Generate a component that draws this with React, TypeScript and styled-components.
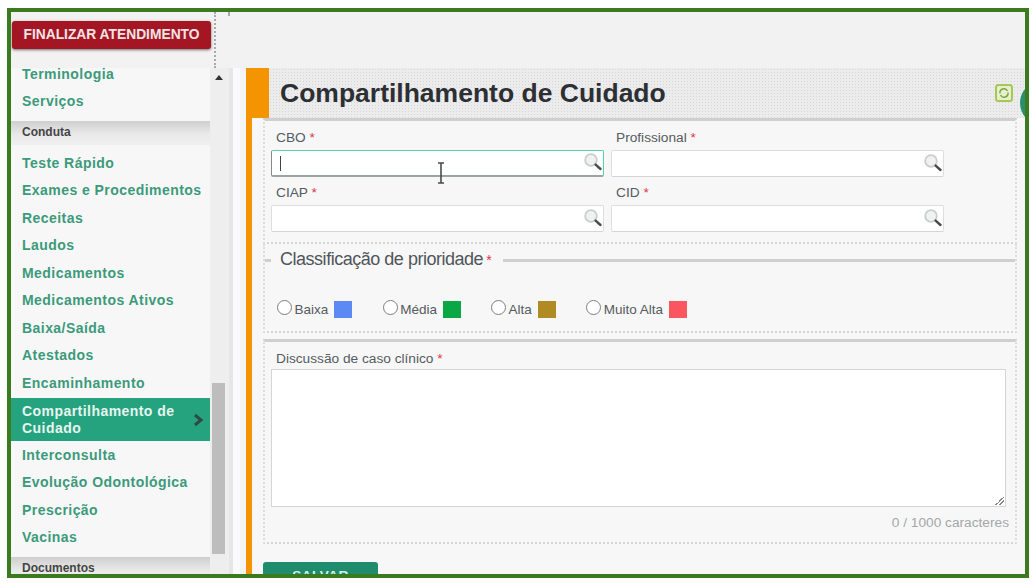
import React from "react";
import styled, { createGlobalStyle } from "styled-components";

const GlobalStyle = createGlobalStyle`
	html, body {
		margin: 0;
		background: #fff;
		font-family: "Liberation Sans", Arial, sans-serif;
	}
`;

const topLinks = ["Terminologia", "Serviços"];
const condutaLinks = [
	"Teste Rápido",
	"Exames e Procedimentos",
	"Receitas",
	"Laudos",
	"Medicamentos",
	"Medicamentos Ativos",
	"Baixa/Saída",
	"Atestados",
	"Encaminhamento",
];
const afterLinks = ["Interconsulta", "Evolução Odontológica", "Prescrição", "Vacinas"];
const priorities = [
	{ name: "Baixa", color: "#5b8af5", gap: 30.5 },
	{ name: "Média", color: "#0aa844", gap: 30 },
	{ name: "Alta", color: "#b08a22", gap: 30.5 },
	{ name: "Muito Alta", color: "#fb5560", gap: 0 },
];

const SearchIcon: React.FC = () => (
	<LensSvg width="20" height="20" viewBox="0 0 20 20">
		<circle cx="8" cy="8" r="5.8" fill="#eff2f0" stroke="#c9cecb" strokeWidth="1.8" />
		<path d="M12.6 12.6 L17.5 17" stroke="#4a4a4a" strokeWidth="2.4" strokeLinecap="round" />
	</LensSvg>
);

const Lookup: React.FC<{ focused?: boolean }> = ({ focused }) => (
	<LookupBox $focused={focused}>
		{focused && <Caret />}
		<SearchIcon />
	</LookupBox>
);

const Field: React.FC<{ label: string; focused?: boolean }> = ({ label, focused }) => (
	<FieldCell>
		<FieldLabel>
			{label} <Req>*</Req>
		</FieldLabel>
		<Lookup focused={focused} />
	</FieldCell>
);

const App: React.FC = () => {
	return (
		<Frame>
			<GlobalStyle />
			<TopBar>
				<TopLeft>
					<FinishButton>FINALIZAR ATENDIMENTO</FinishButton>
				</TopLeft>
				<DottedStub />
			</TopBar>
			<Body>
				<Sidebar>
					<NavList>
						{topLinks.map((l) => (
							<NavItem key={l}>{l}</NavItem>
						))}
						<NavHeading>Conduta</NavHeading>
						{condutaLinks.map((l) => (
							<NavItem key={l}>{l}</NavItem>
						))}
						<ActiveItem>
							<span>Compartilhamento de Cuidado</span>
							<svg width="12" height="14" viewBox="0 0 12 14">
								<path d="M3 2 L9 7 L3 12" fill="none" stroke="#2f4a42" strokeWidth="3" />
							</svg>
						</ActiveItem>
						{afterLinks.map((l) => (
							<NavItem key={l}>{l}</NavItem>
						))}
						<NavHeading>Documentos</NavHeading>
					</NavList>
					<ScrollTrack>
						<ScrollArrow />
						<ScrollThumb />
					</ScrollTrack>
				</Sidebar>
				<Gutter />
				<Main>
					<PageHeader>
						<OrangeTab />
						<HeaderBand>
							<PageTitle>Compartilhamento de Cuidado</PageTitle>
							<RefreshButton>
								<svg width="18" height="18" viewBox="0 0 18 18">
									<rect x="1" y="1" width="16" height="16" rx="2.5" fill="#e6f0cf" stroke="#a6c756" strokeWidth="2" />
									<path d="M5 9.5 A4 4 0 0 1 12.5 7 M13 8.5 A4 4 0 0 1 5.5 11" fill="none" stroke="#7ba53c" strokeWidth="1.4" />
								</svg>
							</RefreshButton>
						</HeaderBand>
					</PageHeader>
					<Content>
						<FieldsBox>
							<FieldsGrid>
								<Field label="CBO" focused />
								<Field label="Profissional" />
								<Field label="CIAP" />
								<Field label="CID" />
							</FieldsGrid>
						</FieldsBox>
						<PriorityBox>
							<LegendRow>
								<LegendLine $w={6} />
								<LegendText>
									Classificação de prioridade<LegendReq>*</LegendReq>
								</LegendText>
								<LegendLine />
							</LegendRow>
							<RadioRow>
								{priorities.map((p) => (
									<RadioOption key={p.name} $gap={p.gap}>
										<RadioDot />
										<RadioName>{p.name}</RadioName>
										<Swatch $color={p.color} />
									</RadioOption>
								))}
							</RadioRow>
						</PriorityBox>
						<DiscussionBox>
							<FieldLabel>
								Discussão de caso clínico <Req>*</Req>
							</FieldLabel>
							<TextBox />
							<Counter>0 / 1000 caracteres</Counter>
						</DiscussionBox>
						<SaveButton>SALVAR</SaveButton>
					</Content>
				</Main>
			</Body>
			<TealCircle />
			<IBeam width="10" height="22" viewBox="0 0 10 22">
				<path d="M2 1 H8 M5 1 V21 M2 21 H8" fill="none" stroke="#4b4b4b" strokeWidth="1.6" />
			</IBeam>
		</Frame>
	);
};

const Frame = styled.div`
	position: relative;
	box-sizing: border-box;
	width: 1022px;
	height: 570px;
	margin: 8px 0 0 7px;
	border: 4px solid #3c7a20;
	background: #f4f4f4;
	overflow: hidden;
	display: flex;
	flex-direction: column;
`;
const TopBar = styled.div`
	flex: none;
	height: 56px;
	display: flex;
	background: #f2f2f2;
`;
const TopLeft = styled.div`
	box-sizing: border-box;
	width: 205px;
	height: 100%;
	padding: 9px 0 0 1px;
	border-right: 2px dotted #a9a9a9;
`;
const DottedStub = styled.div`
	width: 0;
	height: 4px;
	margin-left: 12px;
	border-left: 2px dotted #a9a9a9;
`;
const FinishButton = styled.button`
	display: block;
	width: 199px;
	height: 28px;
	padding: 0 0 2px;
	border: 0;
	border-radius: 3px;
	background: #a51625;
	box-shadow: 0 1px 3px rgba(0, 0, 0, 0.55);
	color: #f3e4e4;
	font: bold 13.8px "Liberation Sans", Arial, sans-serif;
`;
const Body = styled.div`
	flex: 1;
	min-height: 0;
	display: flex;
`;
const Sidebar = styled.div`
	flex: none;
	width: 218px;
	display: flex;
`;
const NavList = styled.div`
	flex: none;
	width: 199px;
	background: #f7f7f7;
`;
const NavItem = styled.div`
	box-sizing: border-box;
	height: 27.5px;
	padding-left: 11px;
	line-height: 27.5px;
	color: #3c9a7b;
	font-size: 14px;
	font-weight: bold;
	letter-spacing: 0.45px;
	white-space: nowrap;
	&:first-child {
		height: 20px;
		line-height: 12px;
	}
`;
const NavHeading = styled.div`
	height: 24px;
	margin: 5px 0;
	padding-left: 11px;
	line-height: 23px;
	background: linear-gradient(#cfcfcf, #e9e9e9 55%, #f0f0f0);
	color: #444;
	font-size: 12px;
	font-weight: bold;
`;
const ActiveItem = styled.div`
	box-sizing: border-box;
	height: 43px;
	margin: 0.75px 0 1px;
	padding: 2px 6px 0 11px;
	display: flex;
	align-items: center;
	justify-content: space-between;
	background: #25a37e;
	color: #e8f5f0;
	font-size: 14px;
	font-weight: bold;
	letter-spacing: 0.45px;
	line-height: 17px;
	span {
		width: 170px;
	}
`;
const ScrollTrack = styled.div`
	flex: none;
	width: 19px;
	padding-left: 2px;
	box-sizing: border-box;
	display: flex;
	flex-direction: column;
	background: #eeeeee;
`;
const ScrollArrow = styled.div`
	flex: none;
	width: 0;
	height: 0;
	margin: 7px 0 0 3px;
	border-left: 4px solid transparent;
	border-right: 4px solid transparent;
	border-bottom: 5px solid #333;
`;
const ScrollThumb = styled.div`
	flex: none;
	width: 13px;
	height: 171px;
	margin-top: auto;
	margin-bottom: 20px;
	background: #bdbdbd;
`;
const Gutter = styled.div`
	flex: none;
	width: 17px;
	background: linear-gradient(90deg, #e6e6e6 0 4px, #fafafc 4px 11px, #f4f4f4 11px);
`;
const Main = styled.div`
	flex: 1;
	min-width: 0;
	display: flex;
	flex-direction: column;
	border-left: 6px solid #f49500;
`;
const PageHeader = styled.div`
	flex: none;
	height: 50px;
	display: flex;
`;
const OrangeTab = styled.div`
	flex: none;
	width: 17px;
	background: #f49500;
`;
const HeaderBand = styled.div`
	flex: 1;
	display: flex;
	align-items: center;
	justify-content: space-between;
	padding: 0 12px 0 11px;
	background-color: #ececec;
	background-image: radial-gradient(#d6d6d6 0.8px, transparent 0.9px);
	background-size: 3px 3px;
`;
const PageTitle = styled.h1`
	margin: 0;
	color: #2c2f33;
	font-size: 26.5px;
	font-weight: bold;
	white-space: nowrap;
`;
const RefreshButton = styled.div`
	display: flex;
`;
const Content = styled.div`
	flex: 1;
	min-height: 0;
	padding: 0 8px 0 11px;
	background: #f7f7f7;
	overflow: hidden;
`;
const FieldsBox = styled.div`
	box-sizing: border-box;
	height: 126px;
	padding: 9px 6px 0;
	border-top: 3px solid #cfcfcf;
	border-left: 2px dotted #dcdcdc;
	border-right: 2px dotted #dcdcdc;
	border-bottom: 2px dotted #d6d6d6;
`;
const FieldsGrid = styled.div`
	display: grid;
	grid-template-columns: 333px 333px;
	column-gap: 7px;
	row-gap: 8px;
`;
const FieldCell = styled.div``;
const FieldLabel = styled.label`
	display: block;
	padding-left: 5px;
	height: 20px;
	color: #555b60;
	font-size: 13.7px;
	line-height: 16px;
`;
const Req = styled.span`
	color: #e0344a;
`;
const LookupBox = styled.div<{ $focused?: boolean }>`
	box-sizing: border-box;
	height: 27px;
	display: flex;
	align-items: center;
	justify-content: flex-end;
	position: relative;
	background: #fff;
	border: 1px solid ${(p) => (p.$focused ? "#55d0b0" : "#dedede")};
	border-left-color: ${(p) => (p.$focused ? "#8a8a8a" : "#dedede")};
	border-bottom: ${(p) => (p.$focused ? "2px solid #9aa5a1" : "1px solid #d4d4d4")};
	border-radius: 2px;
`;
const Caret = styled.span`
	position: absolute;
	left: 8px;
	top: 5px;
	width: 1px;
	height: 15px;
	background: #444;
`;
const LensSvg = styled.svg`
	flex: none;
	margin-top: -2px;
`;
const PriorityBox = styled.div`
	box-sizing: border-box;
	height: 89px;
	border-left: 2px dotted #dcdcdc;
	border-right: 2px dotted #dcdcdc;
	border-bottom: 2px dotted #d6d6d6;
`;
const LegendRow = styled.div`
	display: flex;
	align-items: center;
	height: 30px;
`;
const LegendLine = styled.div<{ $w?: number }>`
	flex: ${(p) => (p.$w ? `0 0 ${p.$w}px` : "1")};
	height: 3px;
	margin-top: 2px;
	background: #cfcfcf;
`;
const LegendText = styled.div`
	padding: 0 12px 0 9px;
	color: #50565b;
	font-size: 18px;
	letter-spacing: -0.48px;
	white-space: nowrap;
`;
const LegendReq = styled.span`
	margin-left: 3px;
	color: #d8344a;
	font-size: 14px;
`;
const RadioRow = styled.div`
	display: flex;
	align-items: center;
	margin-top: 27px;
	padding-left: 12px;
`;
const RadioOption = styled.div<{ $gap: number }>`
	display: flex;
	align-items: center;
	margin-right: ${(p) => p.$gap}px;
`;
const RadioDot = styled.span`
	box-sizing: border-box;
	width: 15px;
	height: 15px;
	margin-top: -4px;
	border: 1px solid #7e7e7e;
	border-radius: 50%;
	background: #fff;
`;
const RadioName = styled.span`
	margin-left: 2.5px;
	color: #555b60;
	font-size: 13.5px;
`;
const Swatch = styled.span<{ $color: string }>`
	width: 18px;
	height: 17px;
	margin-left: 6px;
	background: ${(p) => p.$color};
`;
const DiscussionBox = styled.div`
	box-sizing: border-box;
	height: 205px;
	margin-top: 6px;
	padding: 9px 6px 0;
	border-top: 3px solid #cfcfcf;
	border-left: 2px dotted #dcdcdc;
	border-right: 2px dotted #dcdcdc;
	border-bottom: 2px dotted #d6d6d6;
`;
const TextBox = styled.div`
	box-sizing: border-box;
	width: 735px;
	height: 138px;
	margin-top: -2px;
	background: #fff;
	border: 1px solid #d6d6d6;
	position: relative;
	&::after {
		content: "";
		position: absolute;
		right: 1px;
		bottom: 1px;
		width: 9px;
		height: 9px;
		background: linear-gradient(135deg, transparent 50%, #888 50%, #888 58%, transparent 58%, transparent 72%, #888 72%, #888 80%, transparent 80%);
	}
`;
const Counter = styled.div`
	width: 738px;
	margin-top: 8px;
	text-align: right;
	color: #a3a8ab;
	font-size: 13.7px;
`;
const SaveButton = styled.button`
	display: block;
	width: 115px;
	height: 26px;
	margin-top: 18px;
	padding: 0;
	border: 0;
	border-radius: 3px 3px 0 0;
	background: #1f8d6d;
	color: #d8efe7;
	font: bold 13.5px "Liberation Sans", Arial, sans-serif;
	letter-spacing: 0.5px;
`;
const TealCircle = styled.div`
	position: absolute;
	right: -39px;
	top: 69px;
	width: 44px;
	height: 44px;
	border-radius: 50%;
	background: #2b8f6e;
`;
const IBeam = styled.svg`
	position: absolute;
	left: 425px;
	top: 150px;
`;

export default App;
